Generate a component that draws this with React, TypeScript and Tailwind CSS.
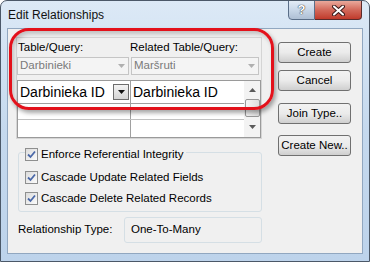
const btn =
  "flex h-[21px] w-[73px] items-center justify-center rounded-[3px] border border-[#707070] bg-gradient-to-b from-[#f2f2f2] via-[#ebebeb] to-[#cfcfcf] text-[11.5px] text-black";

function Check({ label }: { label: string }) {
  return (
    <div className="flex h-[13px] items-center gap-[3px]">
      <div className="flex h-[13px] w-[13px] items-center justify-center border border-[#8e8f8f] bg-gradient-to-br from-[#dcdcdc] to-[#fbfbfb]">
        <svg width="9" height="9" viewBox="0 0 9 9">
          <path d="M1 4.5 L3.5 7 L8 1.5" fill="none" stroke="#4a68a8" strokeWidth="1.8" />
        </svg>
      </div>
      <span className="leading-[13px]">{label}</span>
    </div>
  );
}

function Arrow({ up, color = "#4d4d4d" }: { up?: boolean; color?: string }) {
  return (
    <svg width="7" height="4" viewBox="0 0 7 4">
      <path d={up ? "M0 4 L3.5 0 L7 4 Z" : "M0 0 L7 0 L3.5 4 Z"} fill={color} />
    </svg>
  );
}

export default function App() {
  return (
    <div className="relative flex h-[262px] w-[370px] flex-col overflow-hidden rounded-t-[7px] border border-[#4b5868] bg-gradient-to-b from-[#dce9f6] via-[#c5d9ee] to-[#bdd3eb] font-['Liberation_Sans',sans-serif] text-[11.5px] text-black">
      {/* title bar */}
      <div className="flex h-[27px] items-start justify-between">
        <div className="flex h-[27px] items-center pl-[7px] text-[12px] text-[#111]">Edit Relationships</div>
        <div className="-mt-[1px] mr-[7px] flex">
          <div className="flex h-[20px] w-[27px] items-center justify-center rounded-bl-[4px] border border-[#5a6e88] bg-gradient-to-b from-[#e3ecf6] via-[#c8d7e8] to-[#aebfd4] text-[13px] font-bold text-white [text-shadow:0_0_1px_#222,0_0_1px_#222]">
            ?
          </div>
          <div className="flex h-[20px] w-[47px] items-center justify-center rounded-br-[4px] border border-l-0 border-[#5a2b2b] bg-gradient-to-b from-[#e9a99c] via-[#d2685a] to-[#c0392b]">
            <svg width="13" height="11" viewBox="0 0 13 11">
              <path d="M2 1.5 L11 9.5 M11 1.5 L2 9.5" stroke="#3a1a1a" strokeWidth="4" strokeLinecap="round" />
              <path d="M2 1.5 L11 9.5 M11 1.5 L2 9.5" stroke="#fff" strokeWidth="2" strokeLinecap="round" />
            </svg>
          </div>
        </div>
      </div>

      {/* client */}
      <div className="mx-[6px] flex h-[226px] border border-[#91a7c0] bg-[#f0f0f0] pl-[8px] pt-[8px]">
        <div className="flex w-[246px] flex-col">
          {/* table panel */}
          <div className="h-[102px] border border-[#d5d5d5]">
            <div className="flex h-[19px] pt-[3px] leading-[13px]">
              <div className="w-[113px] pl-[1px]">Table/Query:</div>
              <div>Related Table/Query:</div>
            </div>
            <div className="flex h-[18px] gap-[2px]">
              <div className="flex w-[112px] items-center justify-between border border-[#c5c5c5] bg-[#f4f4f4] pl-[2px] pr-[3px] text-[#7a7a7a]">
                <span>Darbinieki</span>
                <Arrow color="#b0b0b0" />
              </div>
              <div className="flex w-[128px] items-center justify-between border border-[#c5c5c5] bg-[#f4f4f4] pl-[2px] pr-[3px] text-[#7a7a7a]">
                <span>Maršruti</span>
                <Arrow color="#b0b0b0" />
              </div>
            </div>
            {/* grid */}
            <div className="mt-[5px] flex h-[58px] border border-[#9a9a9a] bg-white">
              <div className="flex w-[226px] flex-col">
                <div className="flex h-[23px] border-b border-[#a0a0a0] text-[14px]">
                  <div className="flex w-[113px] items-center justify-between border-r border-[#a0a0a0] pl-[2px] pr-[1px]">
                    <span>Darbinieka ID</span>
                    <div className="flex h-[16px] w-[16px] items-center justify-center border border-[#6d6d6d] bg-gradient-to-b from-[#f3f3f3] to-[#d5d5d5]">
                      <Arrow color="#111" />
                    </div>
                  </div>
                  <div className="flex items-center pl-[2px]">Darbinieka ID</div>
                </div>
                <div className="flex h-[16px] border-b border-[#c0c0c0]">
                  <div className="w-[113px] border-r border-[#a0a0a0]" />
                </div>
                <div className="flex flex-1">
                  <div className="w-[113px] border-r border-[#a0a0a0]" />
                </div>
              </div>
              <div className="flex w-[16px] flex-col items-center bg-[#f3f3f3]">
                <div className="flex h-[17px] items-center">
                  <Arrow up color="#5a5a5a" />
                </div>
                <div className="mt-[1px] h-[18px] w-[15px] rounded-[2px] border border-[#989898] bg-gradient-to-r from-[#f5f5f5] to-[#dedede]" />
                <div className="flex flex-1 items-center">
                  <Arrow color="#5a5a5a" />
                </div>
              </div>
            </div>
          </div>

          {/* checkbox group */}
          <div className="ml-[2px] mt-[13px] flex h-[60px] w-[244px] flex-col rounded-[3px] border border-[#d5dfe5] pl-[6px]">
            <div className="-mt-[5px] self-start bg-[#f0f0f0] pr-[2px]">
              <Check label="Enforce Referential Integrity" />
            </div>
            <div className="mt-[10px]">
              <Check label="Cascade Update Related Fields" />
            </div>
            <div className="mt-[8px]">
              <Check label="Cascade Delete Related Records" />
            </div>
          </div>

          {/* relationship type */}
          <div className="ml-[2px] mt-[5px] flex h-[26px] items-center">
            <div className="w-[106px]">Relationship Type:</div>
            <div className="flex h-[26px] w-[138px] items-center rounded-[3px] border border-[#d5dfe5] pl-[6px]">
              One-To-Many
            </div>
          </div>
        </div>

        {/* buttons */}
        <div className="ml-[16px] mt-[5px] flex flex-col">
          <div className={btn + " border-[#3c7fb1] from-[#eaf6fd] via-[#d9f0fc] to-[#a7d9f5]"}>Create</div>
          <div className={btn + " mt-[7px]"}>Cancel</div>
          <div className={btn + " mt-[12px]"}>Join Type..</div>
          <div className={btn + " mt-[11px]"}>Create New..</div>
        </div>
      </div>

      {/* red annotation */}
      <div className="pointer-events-none absolute left-[8px] top-[27px] h-[82px] w-[265px] rounded-[20px] border-[3px] border-[#e3111b] shadow-[2px_3px_4px_rgba(0,0,0,0.35),inset_2px_3px_4px_rgba(0,0,0,0.2)]" />
    </div>
  );
}
